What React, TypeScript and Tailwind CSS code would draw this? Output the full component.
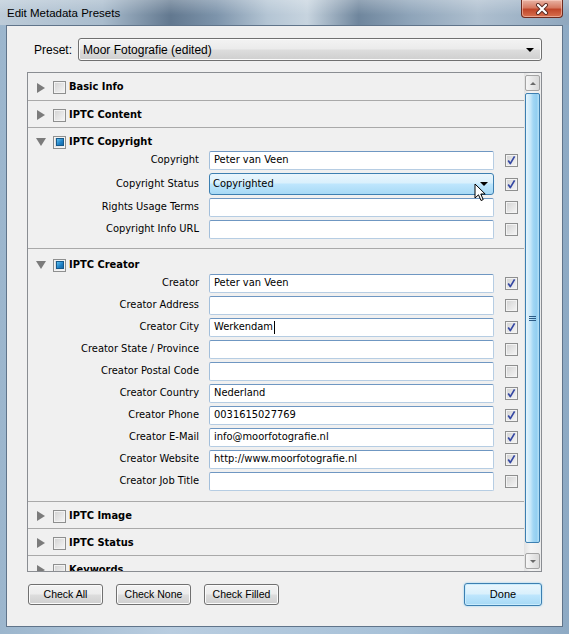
import React from 'react';

type Field = {
  label: string;
  value?: string;
  checked: boolean;
  select?: boolean;
  caret?: boolean;
};

const copyrightFields: Field[] = [
  { label: 'Copyright', value: 'Peter van Veen', checked: true },
  { label: 'Copyright Status', value: 'Copyrighted', checked: true, select: true },
  { label: 'Rights Usage Terms', checked: false },
  { label: 'Copyright Info URL', checked: false },
];

const creatorFields: Field[] = [
  { label: 'Creator', value: 'Peter van Veen', checked: true },
  { label: 'Creator Address', checked: false },
  { label: 'Creator City', value: 'Werkendam', checked: true, caret: true },
  { label: 'Creator State / Province', checked: false },
  { label: 'Creator Postal Code', checked: false },
  { label: 'Creator Country', value: 'Nederland', checked: true },
  { label: 'Creator Phone', value: '0031615027769', checked: true },
  { label: 'Creator E-Mail', value: 'info@moorfotografie.nl', checked: true },
  { label: 'Creator Website', value: 'http://www.moorfotografie.nl', checked: true },
  { label: 'Creator Job Title', checked: false },
];

const panelFont = "font-['DejaVu_Sans_Condensed','Liberation_Sans',sans-serif]";

const Triangle: React.FC<{ open?: boolean }> = ({ open }) => (
  <span className="w-[10px] h-[10px] flex items-center justify-center shrink-0">
    {open ? (
      <span className="w-0 h-0 border-x-[5px] border-x-transparent border-t-[8px] border-t-[#7b7b7b]" />
    ) : (
      <span className="w-0 h-0 border-y-[5px] border-y-transparent border-l-[8px] border-l-[#7b7b7b]" />
    )}
  </span>
);

// Vista style box, used for the section and the field check boxes
const Box: React.FC<{ children?: React.ReactNode; className?: string }> = ({ children, className }) => (
  <span
    className={
      'w-[13px] h-[13px] shrink-0 border border-[#8e8f8f] bg-[linear-gradient(135deg,#d2d2d2,#f6f6f6)] shadow-[inset_0_0_0_1px_#f3f3f3] flex items-center justify-center ' +
      (className || '')
    }
  >
    {children}
  </span>
);

const SectionCheck: React.FC<{ on?: boolean }> = ({ on }) => (
  <Box className="ml-[7px]">
    {on && (
      <span className="w-[8px] h-[8px] border border-[#17598a] bg-[linear-gradient(135deg,#5cc0f0,#1f7fc4_60%,#176aa8)]" />
    )}
  </Box>
);

const FieldCheck: React.FC<{ on: boolean }> = ({ on }) => (
  <Box className="ml-[11px]">
    {on && (
      <svg width="11" height="11" viewBox="0 0 11 11">
        <path d="M2.2 5.6 L4.3 8.6 L8.6 1.4" fill="none" stroke="#3447a3" strokeWidth="1.7" strokeLinejoin="round" />
      </svg>
    )}
  </Box>
);

const Header: React.FC<{ label: string; open?: boolean; on?: boolean }> = ({ label, open, on }) => (
  <div className="flex items-center h-[18px] pl-[8px]">
    <Triangle open={open} />
    <SectionCheck on={on} />
    <span className="ml-[3px] text-[11px] font-bold">{label}</span>
  </div>
);

const Collapsed: React.FC<{ label: string; h: string }> = ({ label, h }) => (
  <div className={'flex items-center pt-[2px] border-b border-[#a9a9a9] shrink-0 ' + h}>
    <div className="flex-1">
      <Header label={label} />
    </div>
  </div>
);

const Cursor: React.FC = () => (
  <svg className="absolute left-[264px] top-[9px] z-10" width="13" height="20" viewBox="0 0 13 20">
    <path d="M1 1 L1 15 L4.5 11.8 L7 17.5 L9.2 16.6 L6.8 11 L11.2 11 Z" fill="#fff" stroke="#000" strokeWidth="1" strokeLinejoin="round" />
  </svg>
);

const FieldRow: React.FC<{ f: Field }> = ({ f }) => (
  <div className={'flex items-center ' + (f.select ? 'h-[22px]' : 'h-[19px]')}>
    <span className="w-[171px] text-right text-[11px] whitespace-nowrap">{f.label}</span>
    {f.select ? (
      <div className="relative ml-[10px] w-[285px] h-full rounded-[3px] border border-[#3c7fb1] bg-[linear-gradient(180deg,#eaf6fd,#d9f0fc_45%,#bee6fd_50%,#a7d9f5)] flex items-center pl-[3px]">
        <span className="text-[11px]">{f.value}</span>
        <span className="ml-auto mr-[5px] w-0 h-0 border-x-[4px] border-x-transparent border-t-[4px] border-t-black" />
        <Cursor />
      </div>
    ) : (
      <div className="ml-[10px] w-[285px] h-full rounded-[2px] border border-[#b6cde3] border-t-[#6f97c2] border-l-[#a3bfdb] bg-white flex items-center pl-[4px]">
        <span className="text-[11px] whitespace-nowrap">{f.value}</span>
        {f.caret && <span className="ml-[1px] w-[1px] h-[13px] bg-black" />}
      </div>
    )}
    <FieldCheck on={f.checked} />
  </div>
);

const Expanded: React.FC<{ label: string; fields: Field[]; pt: string; pb: string }> = ({ label, fields, pt, pb }) => (
  <div className={'border-b border-[#a9a9a9] shrink-0 ' + pt + ' ' + pb}>
    <Header label={label} open on />
    <div className="flex flex-col gap-[3px]">
      {fields.map(f => (
        <FieldRow key={f.label} f={f} />
      ))}
    </div>
  </div>
);

const ScrollButton: React.FC<{ up?: boolean }> = ({ up }) => (
  <div className="ml-[1px] w-[15px] h-[16px] rounded-[2px] border border-[#a3a3a3] bg-[linear-gradient(90deg,#f6f6f6,#e4e4e4_60%,#d9d9d9)] flex items-center justify-center">
    {up ? (
      <span className="w-0 h-0 border-x-[3px] border-x-transparent border-b-[3px] border-b-[#6a6a6a]" />
    ) : (
      <span className="w-0 h-0 border-x-[3px] border-x-transparent border-t-[3px] border-t-[#6a6a6a]" />
    )}
  </div>
);

const Scrollbar: React.FC = () => (
  <div className="w-[17px] shrink-0 flex flex-col pt-[2px] pb-[2px] bg-[linear-gradient(90deg,#e2e2e2,#f4f4f4_40%,#ececec)]">
    <ScrollButton up />
    <div className="mt-[2px] ml-[1px] w-[15px] h-[450px] rounded-[2px] border border-[#3c7fb1] bg-[linear-gradient(90deg,#e6f5fd,#c5e7fa_35%,#a2d6f4_55%,#93cff1_80%,#b5e0f7)] flex items-center justify-center">
      <div className="flex flex-col gap-[1px]">
        <span className="w-[7px] h-[1px] bg-[#2d5c86]" />
        <span className="w-[7px] h-[1px] bg-[#2d5c86]" />
        <span className="w-[7px] h-[1px] bg-[#2d5c86]" />
      </div>
    </div>
    <div className="flex-1" />
    <ScrollButton />
  </div>
);

const Button: React.FC<{ children: React.ReactNode }> = ({ children }) => (
  <div className="w-[75px] h-[21px] rounded-[3px] border border-[#707070] bg-[linear-gradient(180deg,#f3f3f3,#ececec_48%,#dddddd_52%,#cfcfcf)] shadow-[inset_0_0_0_1px_#fbfbfb] flex items-center justify-center text-[10.5px]">
    {children}
  </div>
);

export default function App() {
  return (
    <div className="w-[569px] h-[634px] flex flex-col overflow-hidden bg-[linear-gradient(90deg,#9cb6cd,#b9cde0_30%,#a7c1d8_70%,#8eaac4)] font-['Liberation_Sans',Arial,sans-serif] text-black">
      {/* title bar */}
      <div className="h-[25px] shrink-0 flex items-start bg-[linear-gradient(180deg,rgba(255,255,255,0.25),rgba(255,255,255,0)_60%),linear-gradient(90deg,#bccbd8_0%,#a9bccd_18%,#62788f_30%,#7d94ab_38%,#b4c5d4_47%,#c7d4df_54%,#6f869d_63%,#8ea4b9_72%,#aebfcf_84%,#8fa7be_100%)]">
        <span className="ml-[7px] mt-[5px] text-[11.5px] text-black">Edit Metadata Presets</span>
        <div className="ml-auto mr-[6px] w-[42px] h-[18px] rounded-b-[4px] border border-t-0 border-[#6e2a1e] bg-[linear-gradient(180deg,#e9b3a4,#d67a62_45%,#c0462a_55%,#d8704f)] shadow-[inset_0_0_0_1px_rgba(255,220,210,0.5)] flex items-center justify-center">
          <svg width="14" height="12" viewBox="0 0 14 12">
            <path d="M3 2 L11 10 M11 2 L3 10" stroke="#5a2a22" strokeWidth="4" strokeLinecap="round" />
            <path d="M3 2 L11 10 M11 2 L3 10" stroke="#ffffff" strokeWidth="2.2" strokeLinecap="round" />
          </svg>
        </div>
      </div>

      <div className="flex-1 flex px-[6px] pb-[7px]">
        <div className="flex-1 border border-[#60748a] bg-[#f0f0f0] flex flex-col px-[20px]">
          {/* preset row */}
          <div className="mt-[12px] h-[23px] flex items-center">
            <span className="ml-[7px] text-[12px]">Preset:</span>
            <div className="ml-[6px] flex-1 h-full rounded-[3px] border border-[#707070] bg-[linear-gradient(180deg,#f3f3f3,#ebebeb_48%,#dddddd_52%,#cfcfcf)] shadow-[inset_0_0_0_1px_#fbfbfb] flex items-center pl-[4px]">
              <span className="text-[12px]">Moor Fotografie (edited)</span>
              <span className="ml-auto mr-[7px] w-0 h-0 border-x-[4px] border-x-transparent border-t-[4px] border-t-black" />
            </div>
          </div>

          {/* sections panel */}
          <div className={'mt-[11px] h-[500px] border border-[#8a8d92] flex ' + panelFont}>
            <div className="flex-1 flex flex-col overflow-hidden">
              <Collapsed label="Basic Info" h="h-[28px]" />
              <Collapsed label="IPTC Content" h="h-[27px]" />
              <Expanded label="IPTC Copyright" fields={copyrightFields} pt="pt-[5px]" pb="pb-[9px]" />
              <Expanded label="IPTC Creator" fields={creatorFields} pt="pt-[7px]" pb="pb-[10px]" />
              <Collapsed label="IPTC Image" h="h-[27px]" />
              <Collapsed label="IPTC Status" h="h-[27px]" />
              <Collapsed label="Keywords" h="h-[27px]" />
            </div>
            <Scrollbar />
          </div>

          {/* buttons */}
          <div className="mt-[11px] h-[23px] flex items-center gap-[13px] pl-[1px]">
            <Button>Check All</Button>
            <Button>Check None</Button>
            <Button>Check Filled</Button>
            <div className="ml-auto w-[78px] h-[23px] rounded-[3px] border border-[#3c7fb1] bg-[linear-gradient(180deg,#eaf6fd,#d9f0fc_48%,#bee6fd_52%,#a7d9f5)] shadow-[inset_0_0_0_1px_#c9ecfd,0_0_2px_#7ec8f0] flex items-center justify-center text-[11px]">
              Done
            </div>
          </div>
        </div>
      </div>
    </div>
  );
}
